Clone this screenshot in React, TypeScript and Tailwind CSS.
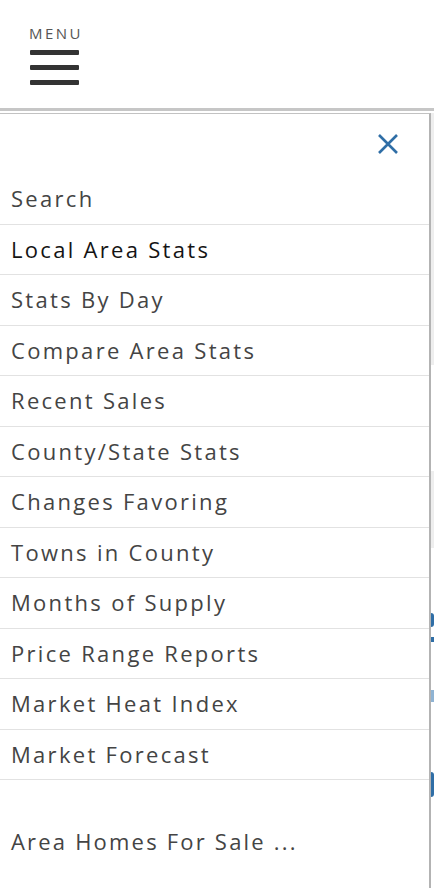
import React from "react";

const items = [
  { label: "Search", active: false },
  { label: "Local Area Stats", active: true },
  { label: "Stats By Day", active: false },
  { label: "Compare Area Stats", active: false },
  { label: "Recent Sales", active: false },
  { label: "County/State Stats", active: false },
  { label: "Changes Favoring", active: false },
  { label: "Towns in County", active: false },
  { label: "Months of Supply", active: false },
  { label: "Price Range Reports", active: false },
  { label: "Market Heat Index", active: false },
  { label: "Market Forecast", active: false },
];

export default function App() {
  return (
    <div
      className="w-[434px] h-[888px] bg-white overflow-hidden flex flex-col"
      style={{ fontFamily: '"Open Sans", "Liberation Sans", sans-serif' }}
    >
      {/* Header */}
      <div className="h-[108px] pt-[26px] pl-[29px] flex flex-col shrink-0">
        <div className="text-[15px] leading-[14px] text-[#555] tracking-[2.5px]">MENU</div>
        <div className="mt-[10px] flex flex-col gap-[10px] w-[49px] ml-[1px]">
          <div className="h-[5px] bg-[#333] rounded-[1px]" />
          <div className="h-[5px] bg-[#333] rounded-[1px]" />
          <div className="h-[5px] bg-[#333] rounded-[1px]" />
        </div>
      </div>
      <div className="h-[3px] bg-[#c6c6c6] shrink-0" />
      <div className="h-[2px] shrink-0" />
      <div className="flex flex-1 min-h-0">
        {/* Panel */}
        <div className="w-[431px] shrink-0 border-t border-t-[#c2c2c2] border-r-2 border-r-[#b3b3b3] bg-white flex flex-col">
          <div className="h-[60px] flex justify-end items-start pt-[19px] pr-[30px]">
            <svg width="22" height="22" viewBox="0 0 22 22">
              <path d="M2 2 L20 20 M20 2 L2 20" stroke="#2f6ea6" strokeWidth="2.6" strokeLinecap="butt" />
            </svg>
          </div>
          {items.map((it) => (
            <div
              key={it.label}
              className={`h-[50.5px] border-b border-b-[#e2e2e2] flex items-center pl-[11px] text-[22px] tracking-[2.3px] ${
                it.active ? "text-[#141414]" : "text-[#444]"
              }`}
            >
              {it.label}
            </div>
          ))}
          <div className="h-[36px]" />
          <div className="h-[50.5px] flex items-center pl-[11px] text-[22px] tracking-[2.2px] text-[#444]">
            Area Homes For Sale ...
          </div>
        </div>
        {/* Background peek */}
        <div className="w-[3px] flex flex-col">
          <div className="h-[252px] bg-[#eeeeee]" />
          <div className="h-[106px]" />
          <div className="h-[77px] bg-[#eeeeee]" />
          <div className="h-[65px]" />
          <div className="h-[14px] bg-[#2f6ea6] rounded-r-full" />
          <div className="h-[10px]" />
          <div className="h-[5px] bg-[#2f6ea6]" />
          <div className="h-[48px]" />
          <div className="h-[12px] bg-[#8fb3d3]" />
          <div className="h-[70px]" />
          <div className="h-[25px] bg-[#2f6ea6] rounded-r-full" />
        </div>
      </div>
    </div>
  );
}
